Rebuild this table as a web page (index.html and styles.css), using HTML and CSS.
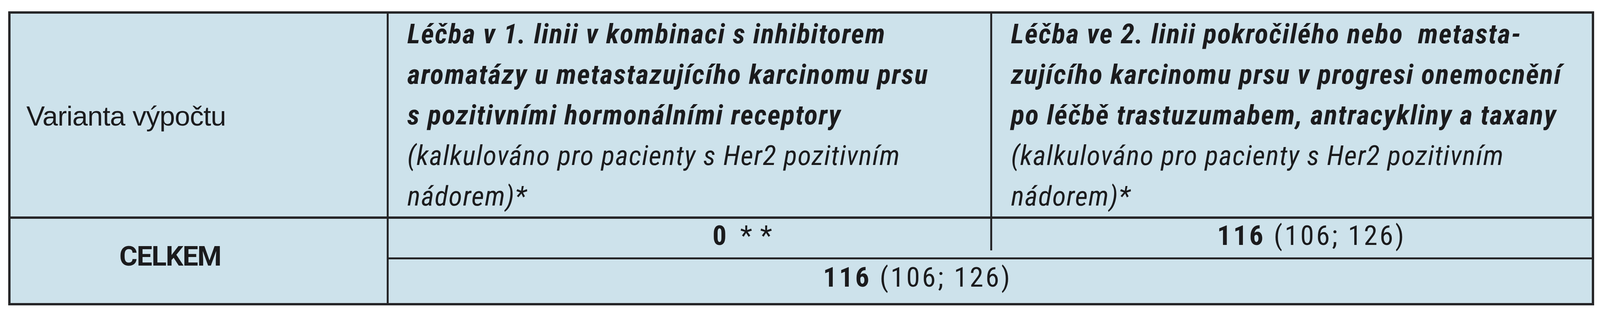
FILE: index.html
```html
<!DOCTYPE html>
<html lang="cs">
<head>
<meta charset="utf-8">
<title>Varianta výpočtu</title>
<link rel="stylesheet" href="styles.css">
</head>
<body>
<div class="tbl">
  <div class="cell head-label"><span class="label-text">Varianta výpočtu</span></div>
  <div class="cell head-col col-mid">
    <span class="hb">Léčba v 1. linii v kombinaci s inhibitorem</span><br>
    <span class="hb">aromatázy u metastazujícího karcinomu prsu</span><br>
    <span class="hb">s pozitivními hormonálními receptory</span><br>
    <span class="hr">(kalkulováno pro pacienty s Her2 pozitivním</span><br>
    <span class="hr">nádorem)*</span>
  </div>
  <div class="cell head-col col-last">
    <span class="hb">Léčba ve 2. linii pokročilého nebo&nbsp; metasta-</span><br>
    <span class="hb">zujícího karcinomu prsu v progresi onemocnění</span><br>
    <span class="hb">po léčbě trastuzumabem, antracykliny a taxany</span><br>
    <span class="hr">(kalkulováno pro pacienty s Her2 pozitivním</span><br>
    <span class="hr">nádorem)*</span>
  </div>
  <div class="cell total-label">CELKEM</div>
  <div class="cell sub sub-a"><div class="sub-inner"><b class="num">0</b><span class="stars">* *</span></div></div>
  <div class="cell sub sub-b"><span class="num"><b>116</b> (106; 126)</span></div>
  <div class="cell sum"><span class="num"><b>116</b> (106; 126)</span></div>
</div>
</body>
</html>
```

FILE: styles.css
```css
html, body {
  background: #ffffff;
}
body {
  margin: 29px 0 0 0.502vw;
  font-family: "Liberation Sans", Arial, sans-serif;
  color: #1b1b1d;
}
.tbl {
  box-sizing: border-box;
  display: grid;
  grid-template-columns: 1084fr 1730fr 1718fr;
  grid-template-rows: 526px 104px 112px;
  width: 99.13vw;
  border: 6px solid #262628;
  background: #cde2eb;
}
.cell {
  box-sizing: border-box;
  min-width: 0;
  font-size: 71px;
}
.head-label {
  display: flex;
  align-items: center;
  padding-left: 1vw;
  padding-top: 4px;
  border-right: 5px solid #262628;
  border-bottom: 6px solid #262628;
}
.label-text {
  letter-spacing: -0.8px;
}
.head-col {
  font-family: "Roboto Condensed", "Liberation Sans", sans-serif;
  font-style: italic;
  line-height: 104px;
  border-bottom: 6px solid #262628;
  white-space: nowrap;
}
.col-mid {
  padding-left: 1.17vw;
  border-right: 5px solid #262628;
}
.col-last {
  padding-left: 1.17vw;
}
.hb {
  font-weight: bold;
  letter-spacing: 2.3px;
}
.hr {
  font-weight: normal;
  letter-spacing: 1.75px;
}
.total-label {
  grid-row: 2 / span 2;
  font-family: Roboto, "Liberation Sans", sans-serif;
  font-weight: bold;
  line-height: 86px;
  padding-top: 53px;
  padding-left: 6.81vw;
  letter-spacing: -2px;
  border-right: 5px solid #262628;
}
.sub {
  line-height: 86px;
  border-bottom: 5px solid #262628;
  white-space: nowrap;
}
.sub-a {
  display: flex;
}
.sub-inner {
  flex: 1;
  margin-bottom: 18px;
  padding-left: 20.24vw;
  border-right: 5px solid #262628;
}
.stars {
  margin-left: 30px;
  word-spacing: 4px;
}
.sub-b {
  padding-left: 14.05vw;
}
.num,
.stars {
  font-family: "Roboto Condensed", "Liberation Sans", sans-serif;
}
.num {
  letter-spacing: 5.3px;
}
.sum {
  grid-column: 2 / span 2;
  line-height: 91px;
  padding-left: 27.15vw;
  white-space: nowrap;
}
```
